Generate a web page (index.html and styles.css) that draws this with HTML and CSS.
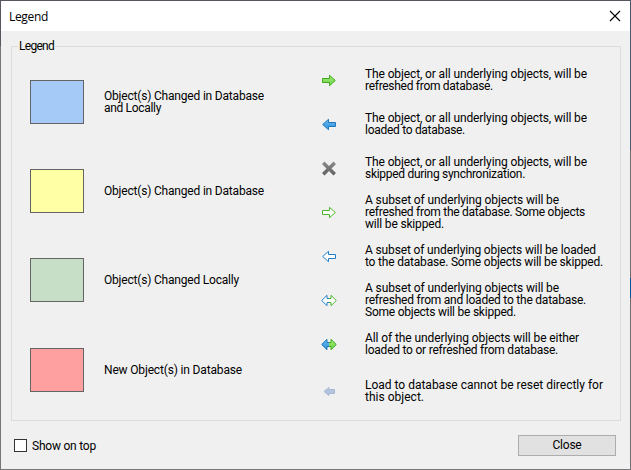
FILE: index.html
```
<!DOCTYPE html>
<html lang="en">
<head>
<meta charset="utf-8">
<title>Legend</title>
<link rel="stylesheet" href="styles.css">
</head>
<body>
<svg class="defs" width="0" height="0">
  <defs>
    <linearGradient id="green" x1="0" y1="0" x2="0" y2="1"><stop offset="0" stop-color="#a4e878"/><stop offset="1" stop-color="#6ad445"/></linearGradient>
    <linearGradient id="blue" x1="0" y1="0" x2="0" y2="1"><stop offset="0" stop-color="#6cbcf0"/><stop offset="1" stop-color="#2c90dc"/></linearGradient>
    <linearGradient id="grey" x1="0" y1="0" x2="0" y2="1"><stop offset="0" stop-color="#8c8c8c"/><stop offset="1" stop-color="#606060"/></linearGradient>
    <path id="right" d="M2.500 6.500h7V3.300L15.300 8.500 9.500 13.700V10.500h-7z"/>
    <path id="left" d="M15.500 6.500h-7V3.300L2.700 8.500l5.800 5.200V10.500h7z"/>
    <path id="half-left" d="M9 6.500H7V3.300L1.700 8.500 7 13.700v-3.200h2"/>
    <path id="half-right" d="M9 6.500h2V3.300l5.300 5.200L11 13.700v-3.200H9"/>
  </defs>
</svg>
<main class="dialog">
  <header class="titlebar"><span class="title" data-width="39">Legend</span>
    <svg class="x" width="12" height="12" viewBox="0 0 12 12"><path d="M1 1l10 10M11 1L1 11" stroke="#000" stroke-width="1.100"/></svg>
  </header>
  <section class="body">
    <fieldset class="group">
      <legend><span data-width="35">Legend</span></legend>
      <div class="columns">
        <div class="swatches">
          <div class="entry"><i class="swatch both"></i><p><span data-width="160">Object(s) Changed in Database</span><span data-width="57">and Locally</span></p></div>
          <div class="entry"><i class="swatch database"></i><p><span data-width="160">Object(s) Changed in Database</span></p></div>
          <div class="entry"><i class="swatch local"></i><p><span data-width="135">Object(s) Changed Locally</span></p></div>
          <div class="entry"><i class="swatch new"></i><p><span data-width="138">New Object(s) in Database</span></p></div>
        </div>
        <div class="actions">
          <div class="row"><svg class="icon"><use href="#right" fill="url(#green)" stroke="#3faa1e"/></svg><p><span data-width="222">The object, or all underlying objects, will be</span><span data-width="128">refreshed from database.</span></p></div>
          <div class="row"><svg class="icon"><use href="#left" fill="url(#blue)" stroke="#1f78bd"/></svg><p><span data-width="222">The object, or all underlying objects, will be</span><span data-width="100">loaded to database.</span></p></div>
          <div class="row tight"><svg class="icon"><path d="M2 4l2.500-2.500L9 6l4.500-4.500L16 4l-4.500 4.500L16 13l-2.500 2.500L9 11l-4.500 4.500L2 13l4.500-4.500z" fill="url(#grey)"/></svg><p><span data-width="222">The object, or all underlying objects, will be</span><span data-width="160">skipped during synchronization.</span></p></div>
          <div class="row tight"><svg class="icon"><use href="#right" fill="#fff" stroke="#4bb52a"/></svg><p><span data-width="194">A subset of underlying objects will be</span><span data-width="220">refreshed from the database. Some objects</span><span data-width="79">will be skipped.</span></p></div>
          <div class="row tight"><svg class="icon"><use href="#left" fill="#fff" stroke="#2380c8"/></svg><p><span data-width="231">A subset of underlying objects will be loaded</span><span data-width="238">to the database. Some objects will be skipped.</span></p></div>
          <div class="row tight"><svg class="icon"><use href="#half-left" fill="#fff" stroke="#2380c8"/><use href="#half-right" fill="#fff" stroke="#4bb52a"/></svg><p><span data-width="194">A subset of underlying objects will be</span><span data-width="221">refreshed from and loaded to the database.</span><span data-width="151">Some objects will be skipped.</span></p></div>
          <div class="row last-gap"><svg class="icon"><use href="#half-left" fill="url(#blue)" stroke="#1f78bd"/><use href="#half-right" fill="url(#green)" stroke="#3faa1e"/></svg><p><span data-width="214">All of the underlying objects will be either</span><span data-width="193">loaded to or refreshed from database.</span></p></div>
          <div class="row"><svg class="icon"><path d="M14.500 6.500H9V4.500L4 8.500 9 12.500v-2h5.500z" fill="#b4c3dc" stroke="#a9b8d3"/></svg><p><span data-width="238">Load to database cannot be reset directly for</span><span data-width="59">this object.</span></p></div>
        </div>
      </div>
    </fieldset>
    <footer class="footer">
      <label class="check"><i class="box"></i><span data-width="64">Show on top</span></label>
      <button class="close"><span data-width="29">Close</span></button>
    </footer>
  </section>
</main>
<script src="fit.js"></script>
</body>
</html>
```
FILE: fit.js
```
// Track each label so that it fills its design width.
document.querySelectorAll("[data-width]").forEach(function (label) {
  var range = document.createRange();
  range.selectNodeContents(label);
  var slack = Number(label.dataset.width) - range.getBoundingClientRect().width;
  label.style.letterSpacing = slack / label.textContent.length + "px";
});
```
FILE: styles.css
```
* { box-sizing: border-box; }
body { margin: 0; width: 631px; height: 470px; overflow: hidden; background: linear-gradient(#4a5a70 106px 150px, #707073 150px 278px, #0a5595 278px 298px, #707073 298px) right / 1px 100% no-repeat, linear-gradient(#55565e 0 46px, #77777a 46px); font: 12px/12px Roboto, "Noto Sans CJK JP", sans-serif; color: #000; }
p { margin: 0; }
.defs { position: absolute; }
.dialog { width: 629px; height: 468px; margin: 1px; background: #f0f0f0; display: flex; flex-direction: column; }
.titlebar { height: 30px; background: #fff; display: flex; align-items: center; justify-content: space-between; padding: 0 9px 0 8px; font: 12px "Open Sans", sans-serif; }
.body { padding: 8px 9px 0 10px; }
.group { margin: 0; border: 1px solid #dcdcdc; padding: 0; height: 382px; min-width: 0; }
.group legend { margin-left: 6px; padding: 0 1px; height: 15px; line-height: 14px; }
.columns { display: flex; }
.swatches { width: 308px; flex: none; padding: 26px 0 0 18px; display: flex; flex-direction: column; gap: 45px; }
.entry { display: flex; align-items: center; height: 44px; gap: 20px; }
.entry:last-child { margin-top: 1px; }
.swatch { width: 54px; height: 44px; border: 1px solid #646464; }
.both { background: #a6caf7; }
.database { background: #ffffa6; }
.local { background: #c7dfc7; }
.new { background: #ffa0a0; }
p span { display: block; white-space: nowrap; height: 12px; }
.actions { padding-top: 14px; }
.row { display: flex; align-items: center; gap: 27px; margin-bottom: 20px; }
.row.tight { margin-bottom: 14px; }
.row.last-gap { margin-bottom: 23px; }
.icon { width: 18px; height: 17px; margin: -3px 0; flex: none; }
.footer { display: flex; justify-content: space-between; align-items: center; padding: 14px 5px 0 3px; }
.check { display: flex; align-items: center; gap: 5px; }
.box { width: 13px; height: 13px; border: 1px solid #333; background: #fff; }
.close { width: 98px; height: 21px; border: 1px solid #adadad; background: #e1e1e1; font: inherit; padding: 0; }
.close span { position: relative; top: -1px; }
```
